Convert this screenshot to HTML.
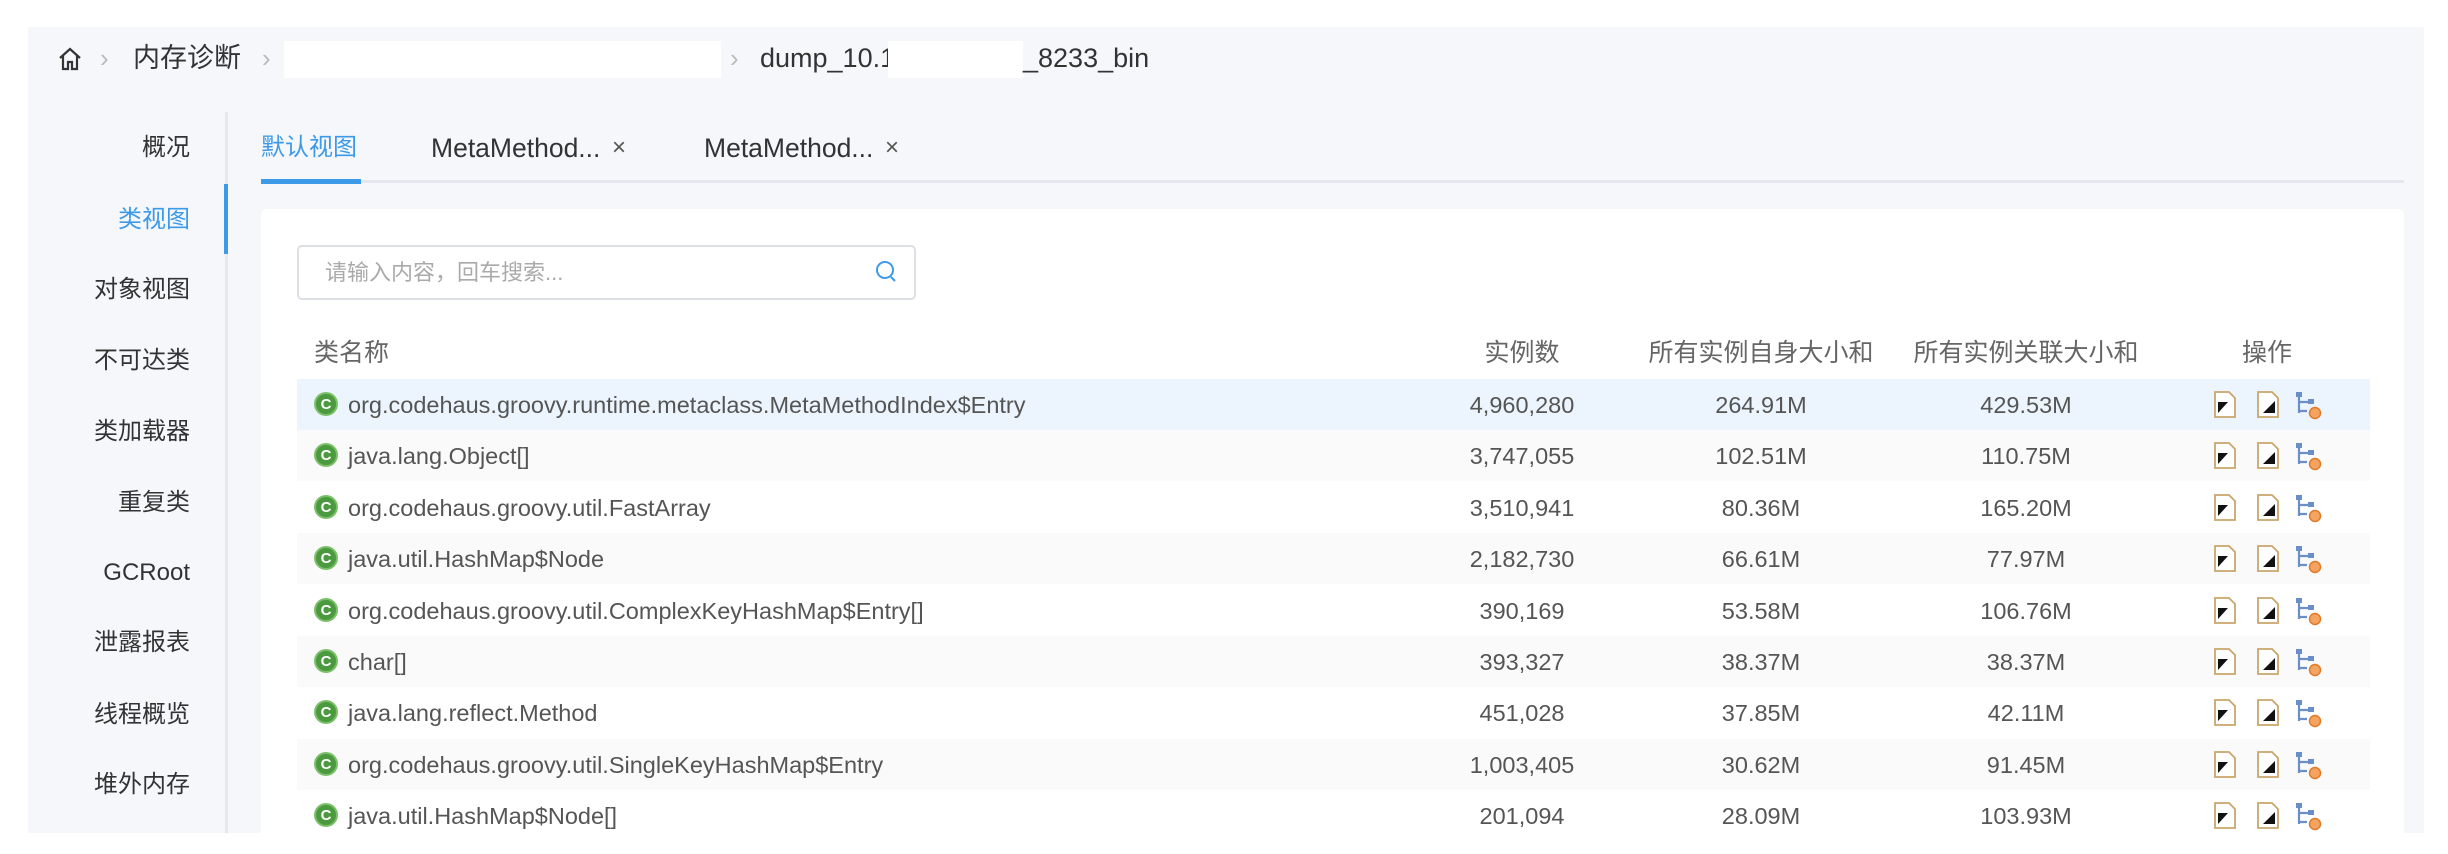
<!DOCTYPE html>
<html><head><meta charset="utf-8"><style>
*{margin:0;padding:0;box-sizing:border-box}
body{width:2448px;height:854px;background:#fff;font-family:"Liberation Sans","Noto Sans CJK SC",sans-serif;position:relative;overflow:hidden;color:#333}
.a{position:absolute;white-space:nowrap}
#panel{left:28px;top:27px;width:2396px;height:806px;background:#f6f7fb}
.bc{top:40px;font-size:27px;color:#333;line-height:36px}
.sep{color:#bbb;font-size:26px}
.nav{right:2258px;font-size:24px;color:#333;line-height:34px}
.tab{top:131px;font-size:24px;line-height:34px;color:#333}
#card{left:261px;top:209px;width:2143px;height:640px;background:#fff;border-radius:6px}
.th{top:336px;font-size:25px;color:#666;line-height:34px}
.row{left:297px;width:2073px;height:51px}
.row span{position:absolute;top:9px;font-size:23.5px;color:#555;line-height:34px}
.row span.n{font-size:23.5px}
.c{position:absolute;left:17px;top:13px;width:24px;height:24px;border-radius:50%;background:#4c9a3f;color:#fff;font-size:15px;font-weight:bold;text-align:center;line-height:21px;border:2px solid #7cc06a}
.ctr{transform:translateX(-50%)}
</style></head><body>
<div class="a" id="panel"></div>
<svg class="a" style="left:57px;top:46px" width="26" height="26" viewBox="0 0 26 26"><path d="M3 12 L13 3 L23 12 M6 10 V23 H11 V16 H15 V23 H20 V10" fill="none" stroke="#333" stroke-width="2.2"/></svg>
<div class="a bc sep" style="left:100px">&rsaquo;</div>
<div class="a bc" style="left:133px">内存诊断</div>
<div class="a bc sep" style="left:262px">&rsaquo;</div>
<div class="a" style="left:284px;top:41px;width:437px;height:37px;background:#fff"></div>
<div class="a bc sep" style="left:730px">&rsaquo;</div>
<div class="a bc" style="left:760px">dump_10.1</div>
<div class="a" style="left:888px;top:41px;width:135px;height:37px;background:#fff"></div>
<div class="a bc" style="left:1023px">_8233_bin</div>

<div class="a" style="left:225px;top:112px;width:3px;height:721px;background:#e6e8ee"></div>
<div class="a" style="left:224px;top:184px;width:4px;height:70px;background:#3c9ae8"></div>
<div class="a nav" style="top:131px">概况</div>
<div class="a nav" style="top:203px;color:#3c9ae8">类视图</div>
<div class="a nav" style="top:273px">对象视图</div>
<div class="a nav" style="top:344px">不可达类</div>
<div class="a nav" style="top:415px">类加载器</div>
<div class="a nav" style="top:486px">重复类</div>
<div class="a nav" style="top:556px">GCRoot</div>
<div class="a nav" style="top:626px">泄露报表</div>
<div class="a nav" style="top:698px">线程概览</div>
<div class="a nav" style="top:768px">堆外内存</div>

<div class="a tab" style="left:261px;color:#3c9ae8">默认视图</div>
<div class="a tab" style="left:431px;font-size:26.5px">MetaMethod...</div>
<div class="a tab" style="left:612px;font-size:24px;color:#555">×</div>
<div class="a tab" style="left:704px;font-size:26.5px">MetaMethod...</div>
<div class="a tab" style="left:885px;font-size:24px;color:#555">×</div>
<div class="a" style="left:261px;top:180px;width:2143px;height:3px;background:#e4e7ed"></div>
<div class="a" style="left:261px;top:179px;width:100px;height:5px;background:#3c9ae8"></div>

<div class="a" id="card"></div>
<div class="a" style="left:297px;top:245px;width:619px;height:55px;border:2px solid #dcdfe6;border-radius:5px;background:#fff"></div>
<div class="a" style="left:325px;top:256px;font-size:22px;color:#aaa;line-height:34px">请输入内容，回车搜索...</div>
<svg class="a" style="left:874px;top:259px" width="24" height="26" viewBox="0 0 24 26"><circle cx="11" cy="11" r="8" fill="none" stroke="#3c9ae8" stroke-width="2"/><path d="M17 18 L21 22" stroke="#3c9ae8" stroke-width="2"/></svg>

<div class="a th" style="left:314px">类名称</div>
<div class="a th ctr" style="left:1522px">实例数</div>
<div class="a th ctr" style="left:1761px">所有实例自身大小和</div>
<div class="a th ctr" style="left:2026px">所有实例关联大小和</div>
<div class="a th ctr" style="left:2267px">操作</div>

<div id="rows"></div>
<svg width="0" height="0" style="position:absolute"><defs>
<g id="ic">
<path d="M1 1 H15 L21 7 V26 H1 Z" fill="#fff" stroke="#c9a66b" stroke-width="1.8"/>
<path d="M4 11 H14 L4 22 Z" fill="#111"/>
<path d="M44 1 H58 L64 7 V26 H44 Z" fill="#fff" stroke="#c9a66b" stroke-width="1.8"/>
<path d="M61 10 V22 H49 Z" fill="#111"/>
<path d="M85 2 V22 M85 11 H96 M85 20 H93" stroke="#6a8fc8" stroke-width="2.2" fill="none"/>
<rect x="82" y="1" width="6" height="5" fill="#6a8fc8"/><rect x="94" y="8" width="6" height="5" fill="#6a8fc8"/>
<circle cx="101" cy="22" r="5.5" fill="#f4a460" stroke="#e07b2a" stroke-width="1.5"/>
</g></defs></svg>
<script>
var d=[["org.codehaus.groovy.runtime.metaclass.MetaMethodIndex$Entry","4,960,280","264.91M","429.53M"],["java.lang.Object[]","3,747,055","102.51M","110.75M"],["org.codehaus.groovy.util.FastArray","3,510,941","80.36M","165.20M"],["java.util.HashMap$Node","2,182,730","66.61M","77.97M"],["org.codehaus.groovy.util.ComplexKeyHashMap$Entry[]","390,169","53.58M","106.76M"],["char[]","393,327","38.37M","38.37M"],["java.lang.reflect.Method","451,028","37.85M","42.11M"],["org.codehaus.groovy.util.SingleKeyHashMap$Entry","1,003,405","30.62M","91.45M"],["java.util.HashMap$Node[]","201,094","28.09M","103.93M"]];
var h="";d.forEach(function(r,i){var t=379+i*51.4;var bg=i==0?"#ecf5fe":(i%2?"#fafafa":"#fff");
h+='<div class="a row" style="top:'+t+'px;background:'+bg+'"><div class="c">C</div><span style="left:51px">'+r[0].replace(/\$/g,"&#36;")+'</span><span class="ctr n" style="left:1225px">'+r[1]+'</span><span class="ctr n" style="left:1464px">'+r[2]+'</span><span class="ctr n" style="left:1729px">'+r[3]+'</span><svg style="position:absolute;left:1917px;top:12px" width="110" height="30"><use href="#ic"/></svg></div>';});
document.getElementById("rows").innerHTML=h;
</script>
<div class="a" style="left:0;top:833px;width:2448px;height:21px;background:#fff"></div>
</body></html>
